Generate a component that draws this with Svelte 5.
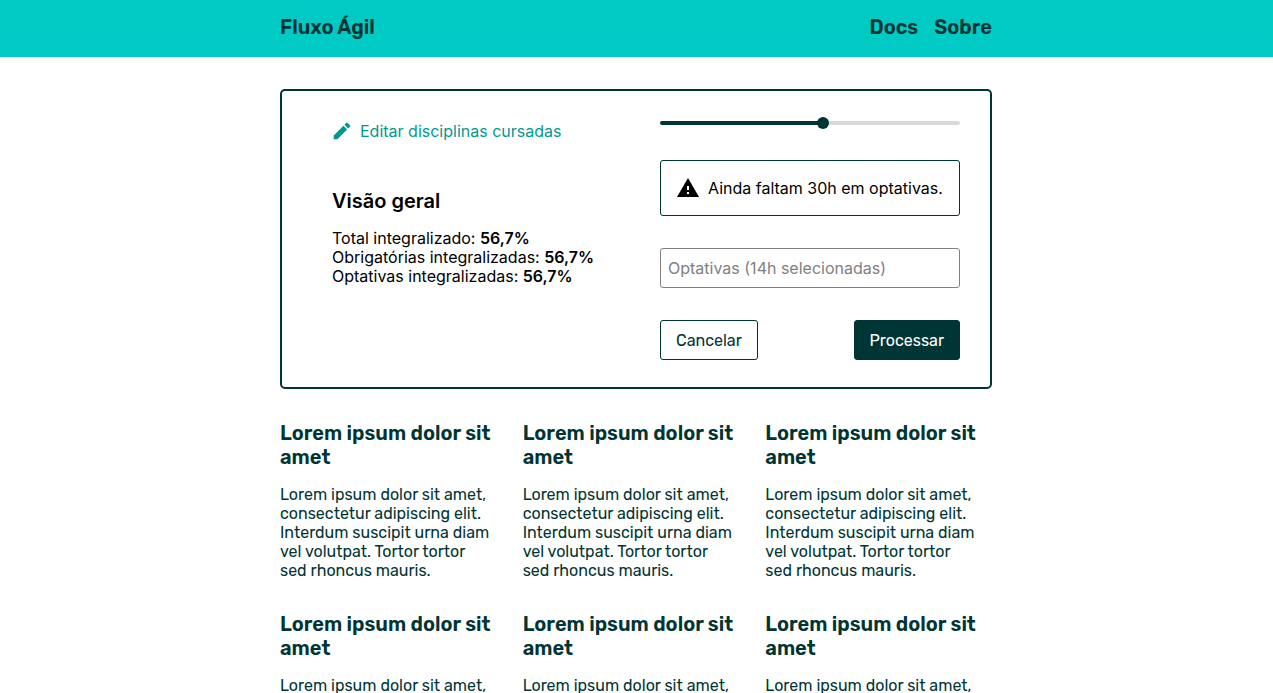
<script>
  let progress = $state(54.5);

  const overview = [
    { label: 'Total integralizado:', value: '56,7%' },
    { label: 'Obrigatórias integralizadas:', value: '56,7%' },
    { label: 'Optativas integralizadas:', value: '56,7%' }
  ];

  const articles = Array.from({ length: 6 }, () => ({
    title: 'Lorem ipsum dolor sit amet',
    body: 'Lorem ipsum dolor sit amet, consectetur adipiscing elit. Interdum suscipit urna diam vel volutpat. Tortor tortor sed rhoncus mauris.'
  }));
</script>

<header class="topbar">
  <div class="container bar">
    <a class="brand" href="#inicio">Fluxo Ágil</a>
    <nav>
      <a href="#docs">Docs</a>
      <a href="#sobre">Sobre</a>
    </nav>
  </div>
</header>

<main class="container">
  <section class="panel">
    <div class="summary">
      <a class="edit" href="#disciplinas">
        <svg viewBox="0 0 24 24" width="20" height="20" aria-hidden="true">
          <path d="M2 17.5V22h4.5L18.2 10.3l-4.5-4.5L2 17.5zM21.6 6.9a1.2 1.2 0 0 0 0-1.7l-2.8-2.8a1.2 1.2 0 0 0-1.7 0l-2.2 2.2 4.5 4.5 2.2-2.2z" fill="currentColor" />
        </svg>
        Editar disciplinas cursadas
      </a>
      <h2>Visão geral</h2>
      <ul>
        {#each overview as item}
          <li>{item.label} <strong>{item.value}</strong></li>
        {/each}
      </ul>
    </div>

    <form class="controls" onsubmit={(event) => event.preventDefault()}>
      <input
        class="slider"
        type="range"
        min="0"
        max="100"
        step="0.5"
        bind:value={progress}
        style="--fill: {progress}%"
        aria-label="Progresso"
      />
      <p class="alert">
        <svg viewBox="0 0 24 24" width="24" height="24" aria-hidden="true">
          <path d="M1 21h22L12 2 1 21zm12-3h-2v-2h2v2zm0-4h-2v-4h2v4z" fill="currentColor" />
        </svg>
        Ainda faltam 30h em optativas.
      </p>
      <input class="field" type="text" placeholder="Optativas (14h selecionadas)" aria-label="Optativas" />
      <div class="actions">
        <button class="outline" type="button">Cancelar</button>
        <button class="solid" type="submit">Processar</button>
      </div>
    </form>
  </section>

  <section class="articles">
    {#each articles as article}
      <article>
        <h3>{article.title}</h3>
        <p>{article.body}</p>
      </article>
    {/each}
  </section>
</main>

<style>
  :global(body) {
    margin: 0;
    background: #fff;
    color: #000;
    font: 400 16px/19px Inter, sans-serif;
  }

  h2, h3, p, ul {
    margin: 0;
    padding: 0;
  }

  a {
    text-decoration: none;
  }

  .container {
    box-sizing: border-box;
    width: 100%;
    max-width: 745px;
    margin: 0 auto;
    padding: 0 17px 0 16px;
  }

  .topbar {
    background: #00cac3;
    font: 600 20px/24px Rubik, Inter, sans-serif;
  }

  .topbar a {
    color: #003535;
  }

  .bar {
    display: flex;
    justify-content: space-between;
    padding-top: 15px;
    padding-bottom: 18px;
  }

  nav {
    display: flex;
    gap: 16px;
  }

  .panel {
    display: flex;
    justify-content: space-between;
    margin: 32px 0;
    padding: 27px 30px 27px 50px;
    border: 2px solid #003535;
    border-radius: 5px;
  }

  .edit {
    display: flex;
    align-items: center;
    gap: 8px;
    height: 26px;
    color: #009992;
  }

  h2 {
    margin: 45px 0 16px;
    font-size: 20px;
    line-height: 24px;
    font-weight: 600;
  }

  ul {
    list-style: none;
  }

  strong {
    font-weight: 600;
  }

  .controls {
    display: flex;
    flex-direction: column;
    gap: 32px;
    width: 300px;
  }

  .slider {
    appearance: none;
    width: 100%;
    height: 10px;
    margin: 0;
    background: transparent;
  }

  .slider::-webkit-slider-runnable-track {
    height: 4px;
    border-radius: 2px;
    background: linear-gradient(to right, #003535 var(--fill), #d9d9d9 var(--fill));
  }

  .slider::-webkit-slider-thumb {
    appearance: none;
    width: 12px;
    height: 12px;
    margin-top: -4px;
    border-radius: 50%;
    background: #003535;
  }

  .alert {
    display: flex;
    align-items: center;
    gap: 8px;
    padding: 15px;
    border: 1px solid #003535;
    border-radius: 3px;
    line-height: 24px;
    white-space: nowrap;
  }

  .field {
    box-sizing: border-box;
    width: 100%;
    height: 40px;
    padding: 0 7px;
    border: 1px solid #808080;
    border-radius: 3px;
    font: inherit;
  }

  .field::placeholder {
    color: #808080;
  }

  .actions {
    display: flex;
    justify-content: space-between;
  }

  button {
    height: 40px;
    padding: 0 15px;
    border: 1px solid #003535;
    border-radius: 3px;
    font: 400 16px/19px Rubik, Inter, sans-serif;
  }

  .outline {
    background: #fff;
    color: #003535;
  }

  .solid {
    background: #003535;
    color: #fff;
  }

  .articles {
    display: grid;
    grid-template-columns: repeat(3, 1fr);
    gap: 32px 16px;
    color: #003535;
    font: 400 16px/19px Rubik, Inter, sans-serif;
  }

  article {
    padding-right: 12px;
  }

  h3 {
    margin-bottom: 16px;
    font-size: 20px;
    line-height: 24px;
    font-weight: 600;
  }
</style>
